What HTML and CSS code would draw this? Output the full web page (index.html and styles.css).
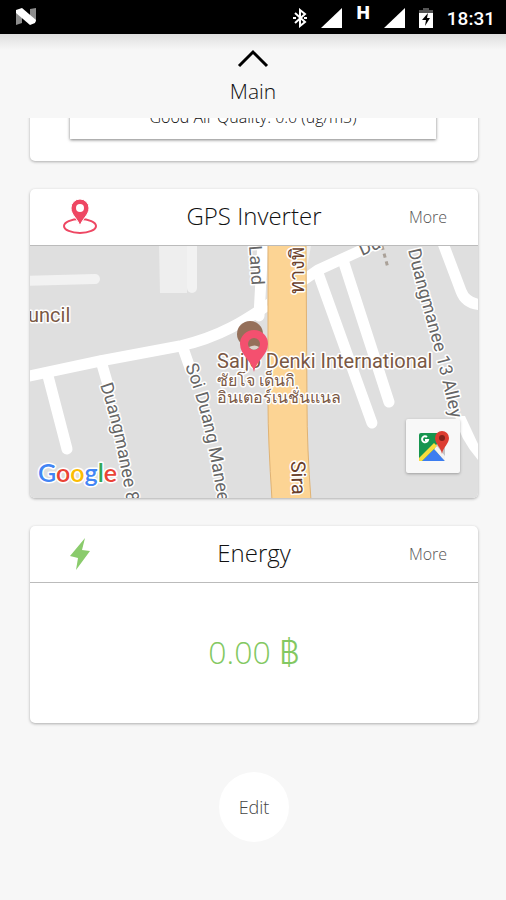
FILE: index.html
```html
<!DOCTYPE html>
<html lang="en">
  <head>
    <meta charset="UTF-8" />
    <meta name="viewport" content="width=device-width, initial-scale=1.0" />
    <title>Main</title>
    <link rel="stylesheet" href="styles.css">
  </head>
  <body>
    <div class="status-bar">
      <svg class="status-logo" width="22" height="18" viewBox="0 0 22 18">
        <path d="M1 2l6 3v10l-6 2zM15 1l6-1v14l-6-4z" fill="#8c8c8c" />
        <path d="M1 2l6-2 14 12-1 3-5 2L1 5z" fill="#fff" />
      </svg>
      <div class="status-icons">
        <svg width="14" height="20" viewBox="0 0 14 20">
          <path d="M2 5l10 9-5 4V2l5 4-10 9" fill="none" stroke="#fff" stroke-width="2" />
          <path d="M0 10h3M11 10h3" stroke="#fff" stroke-width="2" />
        </svg>
        <svg width="21" height="20" viewBox="0 0 21 20">
          <path d="M21 0v20H0z" fill="#fff" />
        </svg>
        <span class="network">H</span>
        <svg width="21" height="20" viewBox="0 0 21 20">
          <path d="M21 0v20H0z" fill="#fff" />
        </svg>
        <svg width="14" height="20" viewBox="0 0 14 20">
          <path d="M4 0h6v2h4v4H0V2h4z" fill="#555" />
          <path d="M0 5h14v15H0z" fill="#fff" />
          <path d="M9 5l-6 7h4l-1 6 5-8H8z" fill="#000" />
        </svg>
        <span class="clock">18:31</span>
      </div>
    </div>

    <header class="top">
      <button class="collapse" type="button">
        <svg width="32" height="19" viewBox="0 0 32 19">
          <path d="M2 17L16 3l14 14" fill="none" stroke="#000" stroke-width="3" />
        </svg>
        <span>Main</span>
      </button>
    </header>

    <main class="cards">
      <section class="card air">
        <p class="air-panel">Good Air Quality: 0.0 (ug/m3)</p>
      </section>

      <section class="card">
        <div class="card-header">
          <svg width="34" height="36" viewBox="0 0 34 36">
            <ellipse cx="17" cy="27" rx="16" ry="7" fill="none" stroke="#ee4763" stroke-width="2" />
            <path d="M17 27C15 20 8 16 8 9a9 9 0 0 1 18 0c0 7-7 11-9 18z" fill="#ee4763" stroke="#fff" />
            <circle cx="17" cy="9" r="4" fill="#fff" />
          </svg>
          <h2>GPS Inverter</h2>
          <a class="more" href="#gps">More</a>
        </div>
        <div class="map" id="gps">
          <svg class="map-canvas" viewBox="0 0 448 252" preserveAspectRatio="xMidYMid slice">
            <defs>
              <path id="duangmanee8" d="M70 139C82 173 90 215 101 280" />
              <path id="soi" d="M155 120C172 162 182 212 193 290" />
              <path id="alley" d="M378 4C392 65 411 117 425 195" />
            </defs>
            <rect width="448" height="252" fill="#dfdfdf" />
            <!-- buildings -->
            <path d="M129 0h28v47h-27z" fill="#eee" />
            <path d="M162 0v42" class="lane" />
            <path d="M-6 35L65 33" class="lane" />
            <!-- roads -->
            <g class="road">
              <path d="M-10 132L70 115 150 100C190 91 215 75 245 54L288 24 345-2" />
              <path d="M233-5l-4 75" />
              <path d="M18 130l19 73" />
              <path d="M71 115l7 24" />
              <path d="M153 102l7 20" />
              <path d="M288 27l54 150" />
              <path d="M313 14l46 142" />
              <path d="M411-8l20 53q5 14 24 14" />
            </g>
            <path d="M425 170q4 22 23 44v-16l-13-28z" fill="#fff" />
            <path d="M238 0h43l-4 22-40 38z" fill="#eee" />
            <path d="M238-2h38l1 160q0 44 4 96h-39q-4-60-4-96z" fill="#fcd494" stroke="#dfb274" />
            <path d="M352 0l6 22" stroke="#aaa198" stroke-width="3" stroke-dasharray="4 4" />

            <g class="street">
              <text><textPath href="#duangmanee8">Duangmanee 8</textPath></text>
              <text><textPath href="#soi">Soi Duang Manee</textPath></text>
              <text><textPath href="#alley">Duangmanee 13 Alley</textPath></text>
              <text transform="translate(219 0) rotate(86)">Land</text>
              <text transform="translate(332 10) rotate(-24)">Du</text>
            </g>
            <g class="highway">
              <text transform="translate(274 48) rotate(-90)">ทางพิ</text>
              <text transform="translate(261 215) rotate(88)">Sira</text>
            </g>
            <text class="place" x="-2" y="76">uncil</text>

            <circle cx="220" cy="88" r="13" fill="#95705a" />
            <text class="place" x="187" y="122">Saijo Denki International</text>
            <text class="place-thai" x="187" y="140">ซัยโจ เด็นกิ</text>
            <text class="place-thai" x="187" y="157">อินเตอร์เนชั่นแนล</text>
            <path d="M224 126C222 115 210 109 210 98a14 14 0 0 1 28 0c0 11-12 17-14 28z" fill="#f4506f" />
            <circle cx="224" cy="98" r="6" fill="#95705a" />
            <path d="M219 101a6 6 0 0 0 10 0q-4-3-10 0z" fill="#dcd3cc" />

            <text class="google" x="8" y="236"><tspan fill="#4285f4">G</tspan><tspan fill="#ea4335">o</tspan><tspan fill="#fbbc05">o</tspan><tspan fill="#4285f4">g</tspan><tspan fill="#34a853">l</tspan><tspan fill="#ea4335">e</tspan></text>
          </svg>
          <button class="open-map" type="button" aria-label="Open map">
            <svg width="32" height="32" viewBox="0 0 32 32">
              <rect x="2" y="3" width="26" height="28" rx="2" fill="#17954f" />
              <path d="M17 17l9-9 2 2v19l-2 2z" fill="#c4c4c4" />
              <path d="M5 31l12-12 11 12z" fill="#3c7df0" />
              <path d="M17 19l3-3 8 10v5z" fill="#f3f3f3" />
              <path d="M2 28l15-15 3 3L5 31H2z" fill="#f9dc3c" />
              <path d="M25 24c-1-7-7-10-7-16a7 7 0 0 1 14 0c0 6-6 9-7 16z" fill="#dd3d31" />
              <circle cx="25" cy="8" r="3" fill="#84231c" />
              <path d="M10 7a3 3 0 1 0 1 3H8" fill="none" stroke="#fff" stroke-width="2" />
            </svg>
          </button>
        </div>
      </section>

      <section class="card">
        <div class="card-header">
          <svg width="20" height="32" viewBox="0 0 20 32">
            <path d="M15 0L0 18l8 2-2 12 14-19-8-1z" fill="#8acb6c" />
          </svg>
          <h2>Energy</h2>
          <a class="more" href="#energy">More</a>
        </div>
        <div class="amount" id="energy">0.00 ฿</div>
      </section>

      <button class="edit" type="button">Edit</button>
    </main>
  </body>
</html>
```
FILE: styles.css
```css
* {
  box-sizing: border-box;
}

body {
  font-family: "Open Sans", "Noto Sans", sans-serif;
  font-weight: 300;
  background-color: #f7f7f7;
  color: #111;
  margin: 0;
  min-height: 100vh;
}

button {
  font: inherit;
  color: inherit;
  border: none;
  padding: 0;
  cursor: pointer;
}

.status-bar {
  background-color: #000;
  color: #fff;
  height: 34px;
  padding: 0 11px 0 15px;
  display: flex;
  justify-content: space-between;
  align-items: center;
}

.status-icons {
  display: flex;
  align-items: center;
  gap: 14px;
  padding-top: 2px;
  font-family: Roboto, sans-serif;
}

.network {
  font-size: 19px;
  line-height: 12px;
  font-weight: 900;
  align-self: flex-start;
}

.clock {
  font-size: 19px;
  font-weight: 500;
}

.top {
  height: 84px;
  display: flex;
  justify-content: center;
  background: linear-gradient(#dedede, #f7f7f7 16px);
}

.collapse {
  background: none;
  display: flex;
  flex-direction: column;
  align-items: center;
  padding-top: 15px;
  gap: 8px;
  font-size: 21px;
  line-height: 30px;
}

.cards {
  overflow: hidden;
  padding: 0 28px 24px 30px;
  display: flex;
  flex-direction: column;
  gap: 28px;
}

.card {
  background-color: #fff;
  border-radius: 5px;
  box-shadow: 0 1px 3px rgba(0, 0, 0, 0.3);
}

/* the list is scrolled, only the end of this card shows */
.air {
  margin-top: -40px;
  padding: 20px 42px 22px 40px;
}

.air-panel {
  margin: 0;
  padding: 7px 8px 10px;
  font-size: 16px;
  line-height: 24px;
  text-align: center;
  box-shadow: 0 1px 3px rgba(0, 0, 0, 0.5);
}

.card-header {
  display: grid;
  grid-template-columns: 100px 1fr 100px;
  align-items: center;
  justify-items: center;
  height: 57px;
  border-bottom: 1px solid #bbb;
}

.card-header h2 {
  margin: 0;
  padding-bottom: 2px;
  font-size: 24px;
  line-height: 32px;
  font-weight: 300;
}

.more {
  font-size: 16px;
  color: #555;
  text-decoration: none;
}

.map {
  position: relative;
}

.map-canvas {
  display: block;
  width: 100%;
  border-radius: 0 0 5px 5px;
}

.map-canvas text {
  font-family: Roboto, "Noto Sans", sans-serif;
  font-weight: 400;
  stroke: #fff;
  stroke-width: 3px;
  stroke-linejoin: round;
  paint-order: stroke;
}

.road {
  fill: none;
  stroke: #fff;
  stroke-width: 11px;
  stroke-linecap: round;
}

.lane {
  stroke: #f2f2f2;
  stroke-width: 10px;
  stroke-linecap: round;
}

.street {
  fill: #666;
  font-size: 18px;
}

.highway {
  fill: #6b3f2b;
  font-size: 20px;
}

.place {
  fill: #7a5844;
  font-size: 20px;
}

.place-thai {
  fill: #7a5844;
  font-size: 16px;
}

.map-canvas .google {
  font-family: Lato, sans-serif;
  font-size: 25px;
  font-weight: 600;
}

.open-map {
  position: absolute;
  right: 18px;
  bottom: 25px;
  width: 54px;
  height: 54px;
  display: flex;
  justify-content: center;
  align-items: center;
  background-color: #f8f8f8;
  border-radius: 2px;
  box-shadow: 0 1px 3px rgba(0, 0, 0, 0.3);
}

.amount {
  padding: 47px 16px 49px;
  font-family: "Open Sans", Inter, sans-serif;
  font-size: 32px;
  line-height: 44px;
  text-align: center;
  color: #83c862;
}

.edit {
  align-self: center;
  width: 70px;
  height: 70px;
  margin-top: 21px;
  border-radius: 50%;
  background-color: #fff;
  color: #444;
  font-size: 18px;
}
```
